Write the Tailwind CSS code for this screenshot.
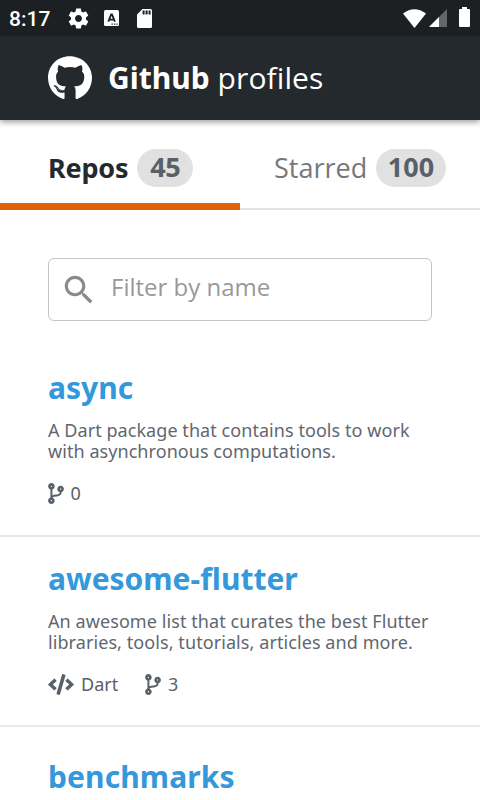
<!DOCTYPE html>
<html lang="en">
<head>
<meta charset="utf-8">
<title>Github profiles</title>
<script src="https://cdn.jsdelivr.net/npm/@tailwindcss/browser@4"></script>
</head>
<body class="w-[480px] h-[800px] overflow-hidden bg-white font-['Noto_Sans',sans-serif] text-[#586069] flex flex-col">
<svg class="hidden">
  <symbol id="branch" viewBox="0 0 384 512"><path d="M384 144c0-44.2-35.8-80-80-80s-80 35.8-80 80c0 36.4 24.3 67.1 57.5 76.8-.6 16.1-4.2 28.5-11 36.9-15.4 19.2-49.3 22.4-85.2 25.7-28.2 2.6-57.4 5.4-81.3 16.9v-144c32.5-10.2 56-40.5 56-76.3 0-44.2-35.8-80-80-80S0 35.8 0 80c0 35.8 23.5 66.1 56 76.3v199.3C23.5 365.9 0 396.2 0 432c0 44.2 35.8 80 80 80s80-35.8 80-80c0-34-21.2-63.1-51.2-74.6 3.1-5.2 7.8-9.8 14.9-13.4 16.2-8.2 40.4-10.4 66.1-12.8 42.2-3.9 90-8.4 118.2-43.4 14-17.4 21.1-39.8 21.6-67.9 31.6-10.8 54.4-40.7 54.4-75.9zM80 64c8.8 0 16 7.2 16 16s-7.2 16-16 16-16-7.2-16-16 7.2-16 16-16zm0 384c-8.8 0-16-7.2-16-16s7.2-16 16-16 16 7.2 16 16-7.2 16-16 16zm224-320c8.8 0 16 7.2 16 16s-7.2 16-16 16-16-7.2-16-16 7.2-16 16-16z"/></symbol>
</svg>
<header class="relative h-[120px] shrink-0 bg-[#24292e] text-white shadow-[0_2px_6px_rgba(0,0,0,0.3),0_2px_6px_rgba(0,0,0,0.12)]">
  <div class="h-9 bg-[#1c2023] flex items-center pl-[9px] pr-[10px] font-['Roboto',sans-serif]">
    <span class="w-[59px] text-[21px] leading-9 font-medium pt-[2px]">8:17</span>
    <svg class="w-[21px] h-[21px]" viewBox="1.5 1.5 21 21" fill="#fff"><path d="M19.43 12.98c.04-.32.07-.64.07-.98s-.03-.66-.07-.98l2.11-1.65c.19-.15.24-.42.12-.64l-2-3.46c-.12-.22-.39-.3-.61-.22l-2.49 1c-.52-.4-1.08-.73-1.69-.98l-.38-2.65C14.46 2.18 14.25 2 14 2h-4c-.25 0-.46.18-.49.42l-.38 2.65c-.61.25-1.17.59-1.69.98l-2.49-1c-.23-.09-.49 0-.61.22l-2 3.46c-.13.22-.07.49.12.64l2.11 1.65c-.04.32-.07.65-.07.98s.03.66.07.98l-2.11 1.65c-.19.15-.24.42-.12.64l2 3.46c.12.22.39.3.61.22l2.49-1c.52.4 1.08.73 1.69.98l.38 2.65c.03.24.24.42.49.42h4c.25 0 .46-.18.49-.42l.38-2.65c.61-.25 1.17-.59 1.69-.98l2.49 1c.23.09.49 0 .61-.22l2-3.46c.12-.22.07-.49-.12-.64l-2.11-1.65zM12 15.5c-1.93 0-3.5-1.57-3.5-3.5s1.57-3.5 3.5-3.5 3.5 1.57 3.5 3.5-1.57 3.5-3.5 3.5z"/></svg>
    <svg class="ml-[15px] w-[15px] h-[16px]" viewBox="0 0 15 16"><rect width="15" height="16" rx="1.5" fill="#fff"/><path d="M4.3 11.7 7.2 4.5h.8l2.9 7.2M5.4 9.6h4.4" fill="none" stroke="#1c2023" stroke-width="1.8"/><path d="M7.5 14.2h1.3M10 14.2h1.3M12.4 14.2h1.2" stroke="#1c2023" stroke-width="1.2"/></svg>
    <svg class="ml-[18px] w-[15px] h-[19px]" viewBox="0 0 15 19"><path d="M5.5 0H13.5Q15 0 15 1.5V17.5Q15 19 13.5 19H1.5Q0 19 0 17.5V5.5Z" fill="#fff"/><path d="M6.6 1.5v4M9.6 1.5v4M12.6 1.5v4" stroke="#1c2023" stroke-width="2"/></svg>
    <svg class="ml-auto w-[23px] h-[19px]" viewBox="0 0 23 19"><path d="M0 4.5Q11.5-4.2 23 4.5L11.5 19Z" fill="#fff"/></svg>
    <svg class="ml-[3px] w-[18px] h-[18px]" viewBox="0 0 18 18"><path d="M18 0V18H0Z" fill="#64676a"/><path d="M10 8V18H0Z" fill="#fff"/></svg>
    <svg class="ml-[12px] w-[11px] h-5 -translate-y-px" viewBox="0 0 11 20"><path d="M3 0h5v2h2q1 0 1 1v16q0 1-1 1H1q-1 0-1-1V3q0-1 1-1h2Z" fill="#fff"/></svg>
  </div>
  <div class="h-[84px] flex items-center pl-12">
    <svg class="w-11 h-11 shrink-0 -translate-y-[0.5px]" viewBox="0 0 496 496" fill="#fff"><path d="M165.9 397.4c0 2-2.3 3.6-5.2 3.6-3.3.3-5.6-1.3-5.6-3.6 0-2 2.3-3.6 5.2-3.6 3-.3 5.6 1.3 5.6 3.6zm-31.1-4.5c-.7 2 1.3 4.3 4.3 4.9 2.6 1 5.6 0 6.2-2s-1.3-4.3-4.3-5.2c-2.6-.7-5.5.3-6.2 2.3zm44.2-1.7c-2.9.7-4.9 2.6-4.6 4.9.3 2 2.9 3.3 5.9 2.6 2.9-.7 4.9-2.6 4.6-4.6-.3-1.9-3-3.2-5.9-2.9zM244.8 8C106.1 8 0 113.3 0 252c0 110.9 69.8 205.8 169.5 239.2 12.8 2.3 17.3-5.6 17.3-12.1 0-6.2-.3-40.4-.3-61.4 0 0-70 15-84.7-29.8 0 0-11.4-29.1-27.8-36.6 0 0-22.9-15.7 1.6-15.4 0 0 24.9 2 38.6 25.8 21.9 38.6 58.6 27.5 72.9 20.9 2.3-16 8.8-27.1 16-33.7-55.9-6.2-112.3-14.3-112.3-110.5 0-27.5 7.6-41.3 23.6-58.9-2.6-6.5-11.1-33.3 2.6-67.9 20.9-6.5 69 27 69 27 20-5.6 41.5-8.5 62.8-8.5s42.8 2.9 62.8 8.5c0 0 48.1-33.6 69-27 13.7 34.7 5.2 61.4 2.6 67.9 16 17.7 25.8 31.5 25.8 58.9 0 96.5-58.9 104.2-114.8 110.5 9.2 7.9 17 22.9 17 46.4 0 33.7-.3 75.4-.3 83.6 0 6.5 4.6 14.4 17.3 12.1C428.2 457.8 496 362.9 496 252 496 113.3 383.5 8 244.8 8zM97.2 352.9c-1.3 1-1 3.3.7 5.2 1.6 1.6 3.9 2.3 5.2 1 1.3-1 1-3.3-.7-5.2-1.6-1.6-3.9-2.3-5.2-1zm-10.8-8.1c-.7 1.3.3 2.9 2.3 3.9 1.6 1 3.6.7 4.3-.7.7-1.3-.3-2.9-2.3-3.9-2-.6-3.6-.3-4.3.7zm32.4 35.6c-1.6 1.3-1 4.3 1.3 6.2 2.3 2.3 5.2 2.6 6.5 1 1.3-1.3.7-4.3-1.3-6.2-2.2-2.3-5.2-2.6-6.5-1zm-11.4-14.7c-1.6 1-1.6 3.6 0 5.9 1.6 2.3 4.3 3.3 5.6 2.3 1.6-1.3 1.6-3.9 0-6.2-1.4-2.3-4-3.3-5.6-2z"/></svg>
    <h1 class="ml-4 text-[30px] leading-[42px] whitespace-pre"><b class="font-bold">Github</b><span class="font-['Open_Sans'] tracking-[0.1px]"> profiles</span></h1>
  </div>
</header>
<nav class="h-[90px] shrink-0 flex text-[27px]">
  <div class="w-60 pl-12 border-b-[7px] border-[#e36209] flex items-center pt-[13px]">
    <span class="font-bold text-[#24292e] tracking-[-0.2px]">Repos</span>
    <span class="ml-[9px] w-14 h-[38px] leading-[36px] rounded-full bg-[#e1e1e1] text-center font-bold tracking-[-0.3px]">45</span>
  </div>
  <div class="w-60 pl-[34px] border-b-2 border-[#e1e4e8] flex items-center pt-[8px]">
    <span class="text-[#74787d] font-['Open_Sans']">Starred</span>
    <span class="ml-auto mr-[34px] w-[70px] h-[38px] leading-[36px] rounded-full bg-[#e1e1e1] text-center font-bold">100</span>
  </div>
</nav>
<main>
  <div class="mx-12 mt-12 h-[63px] border-[1.5px] border-[#c4c4c4] rounded-[6px] flex items-center">
    <svg class="ml-[11px] w-[38px] h-[38px]" viewBox="0 0 24 24" fill="#8a8a8a"><path d="M15.5 14h-.79l-.28-.27C15.41 12.59 16 11.11 16 9.5 16 5.91 13.09 3 9.5 3S3 5.91 3 9.5 5.91 16 9.5 16c1.61 0 3.09-.59 4.23-1.57l.27.28v.79l5 4.99L20.49 19l-4.99-5zm-6 0C7.01 14 5 11.99 5 9.5S7.01 5 9.5 5 14 7.01 14 9.5 11.99 14 9.5 14z"/></svg>
    <span class="ml-[13px] text-2xl text-[#999] font-['Open_Sans'] -translate-y-[3px]">Filter by name</span>
  </div>
  <article class="h-[216px] px-12 pt-[46px] border-b-2 border-[#e6e9ec]">
    <h2 class="text-[30px] leading-[41px] font-bold text-[#3498db]">async</h2>
    <p class="mt-[12px] text-[18px] leading-[21px] whitespace-nowrap tracking-[0.06px] text-[#5f6770]">A Dart package that contains tools to work<br>with asynchronous computations.</p>
    <div class="mt-5 h-[22px] flex items-center text-[18px]"><svg class="w-4 h-[21px] mr-[6.5px]" fill="currentColor"><use href="#branch"/></svg>0</div>
  </article>
  <article class="h-[190px] px-12 pt-[21px] border-b-2 border-[#e6e9ec]">
    <h2 class="text-[30px] leading-[41px] font-bold text-[#3498db]">awesome-flutter</h2>
    <p class="mt-[12px] text-[18px] leading-[21px] whitespace-nowrap tracking-[0.08px] text-[#5f6770]">An awesome list that curates the best Flutter<br>libraries, tools, tutorials, articles and more.</p>
    <div class="mt-5 h-[22px] flex items-center text-[18px]"><svg class="w-[26px] h-[21px] mr-[7px]" viewBox="0 0 640 512" fill="currentColor"><path d="M278.9 511.5l-61-17.7c-6.4-1.8-10-8.5-8.2-14.9L346.2 8.7c1.8-6.4 8.5-10 14.9-8.2l61 17.7c6.4 1.8 10 8.5 8.2 14.9L293.8 503.3c-1.9 6.4-8.5 10.1-14.9 8.2zm-114-112.2l43.5-46.4c4.6-4.9 4.3-12.7-.8-17.2L117 256l90.6-79.7c5.1-4.5 5.5-12.3.8-17.2l-43.5-46.4c-4.5-4.8-12.1-5.1-17-.5L3.8 247.2c-5.1 4.7-5.1 12.8 0 17.5l144.1 135.1c4.9 4.6 12.5 4.4 17-.5zm327.2.6l144.1-135.1c5.1-4.7 5.1-12.8 0-17.5L492.1 112.1c-4.8-4.5-12.4-4.3-17 .5L431.6 159c-4.6 4.9-4.3 12.7.8 17.2L523 256l-90.6 79.7c-5.1 4.5-5.5 12.3-.8 17.2l43.5 46.4c4.5 4.9 12.1 5.1 17 .6z"/></svg><span class="w-16">Dart</span><svg class="w-4 h-[21px] mr-[7px]" fill="currentColor"><use href="#branch"/></svg>3</div>
  </article>
  <article class="px-12 pt-[29px]">
    <h2 class="text-[30px] leading-[41px] font-bold text-[#3498db] tracking-[0.1px]">benchmarks</h2>
  </article>
</main>
</body>
</html>
